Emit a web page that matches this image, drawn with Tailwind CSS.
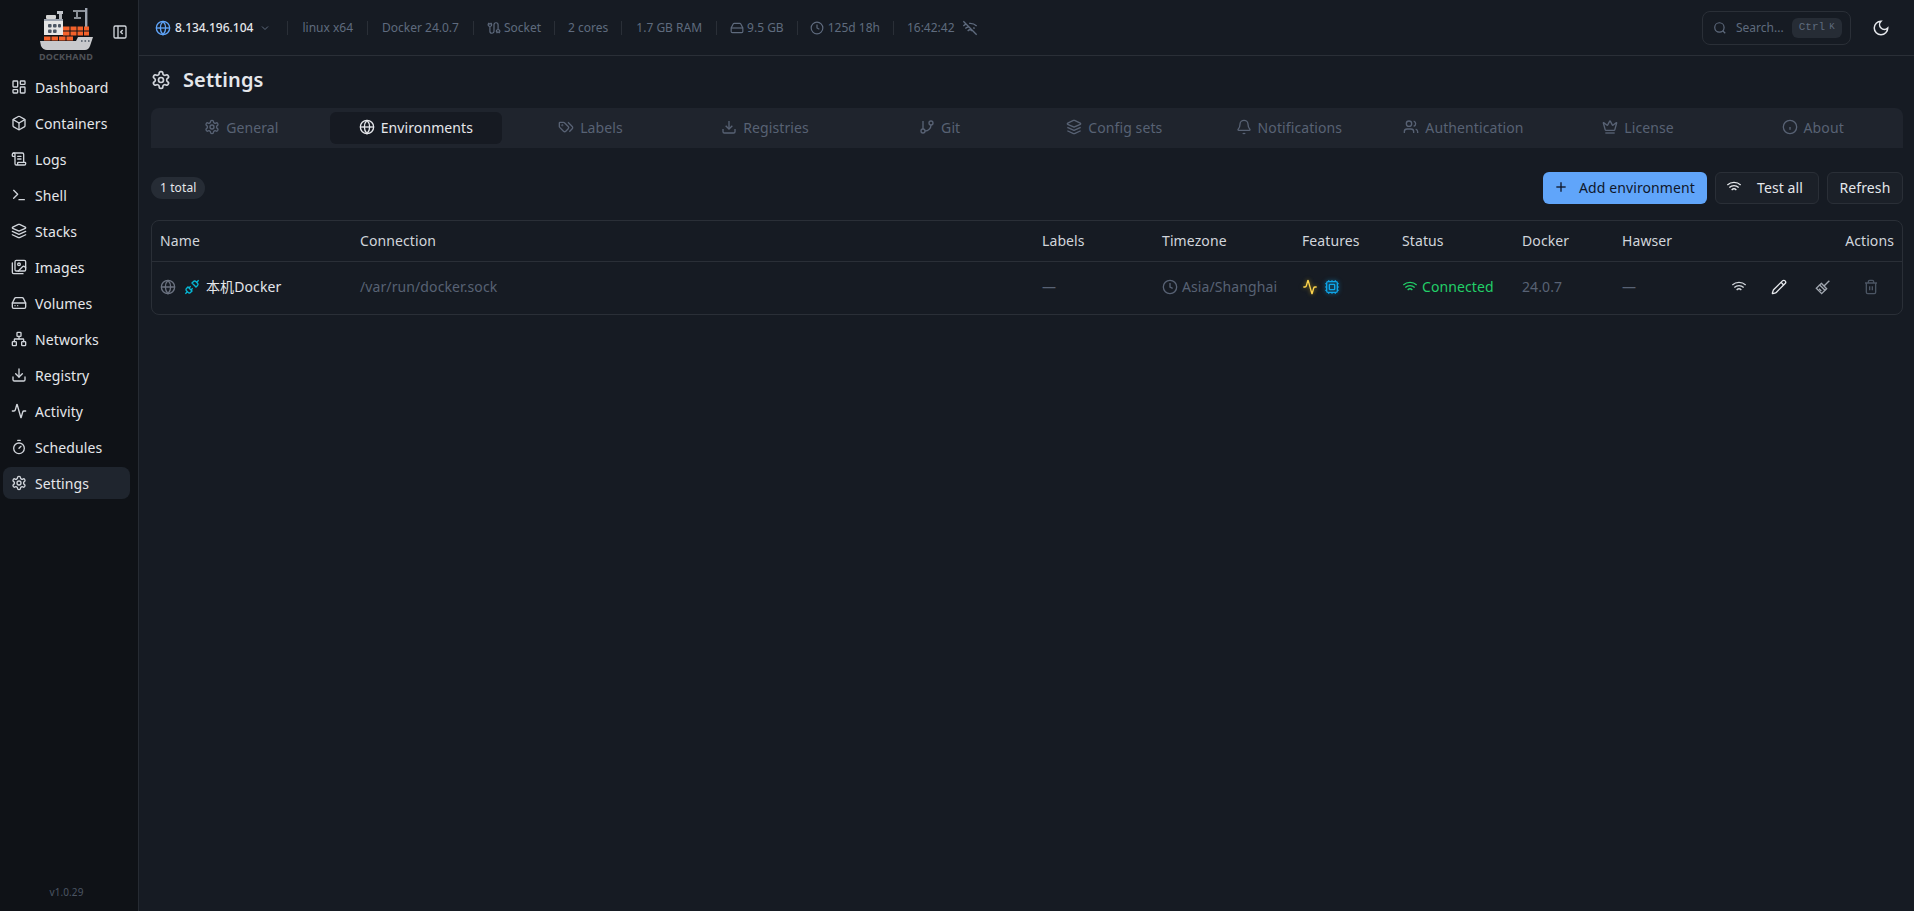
<!DOCTYPE html>
<html lang="en">
<head>
<meta charset="utf-8">
<title>Settings</title>
<script src="https://cdn.jsdelivr.net/npm/@tailwindcss/browser@4"></script>
</head>
<body class="bg-[#161b23] font-['Noto_Sans','Noto_Sans_CJK_SC',sans-serif] tracking-[0.1px] overflow-hidden">
<svg class="hidden">
<defs>
<symbol id="dash" viewBox="0 0 24 24"><rect x="3" y="3" width="7" height="9" rx="1"/><rect x="14" y="3" width="7" height="5" rx="1"/><rect x="14" y="12" width="7" height="9" rx="1"/><rect x="3" y="16" width="7" height="5" rx="1"/></symbol>
<symbol id="box" viewBox="0 0 24 24"><path d="M21 8a2 2 0 0 0-1-1.730l-7-4a2 2 0 0 0-2 0l-7 4A2 2 0 0 0 3 8v8a2 2 0 0 0 1 1.730l7 4a2 2 0 0 0 2 0l7-4A2 2 0 0 0 21 16Z"/><path d="m3.300 7 8.700 5 8.700-5"/><path d="M12 22V12"/></symbol>
<symbol id="scroll" viewBox="0 0 24 24"><path d="M15 12h-5"/><path d="M15 8h-5"/><path d="M19 17V5a2 2 0 0 0-2-2H4"/><path d="M8 21h12a2 2 0 0 0 2-2v-1a1 1 0 0 0-1-1H11a1 1 0 0 0-1 1v1a2 2 0 1 1-4 0V5a2 2 0 1 0-4 0v2a1 1 0 0 0 1 1h3"/></symbol>
<symbol id="term" viewBox="0 0 24 24"><path d="M4 17l6-6-6-6"/><path d="M12 19h8"/></symbol>
<symbol id="layers" viewBox="0 0 24 24"><path d="m12.830 2.180a2 2 0 0 0-1.660 0L2.600 6.080a1 1 0 0 0 0 1.830l8.580 3.910a2 2 0 0 0 1.660 0l8.580-3.900a1 1 0 0 0 0-1.830Z"/><path d="m22 17.650-9.170 4.160a2 2 0 0 1-1.660 0L2 17.650"/><path d="m22 12.650-9.170 4.160a2 2 0 0 1-1.660 0L2 12.650"/></symbol>
<symbol id="images" viewBox="0 0 24 24"><path d="M18 22H4a2 2 0 0 1-2-2V6"/><path d="m22 13-1.296-1.296a2.410 2.410 0 0 0-3.408 0L11 18"/><circle cx="12" cy="8" r="2"/><rect x="6" y="2" width="16" height="16" rx="2"/></symbol>
<symbol id="drive" viewBox="0 0 24 24"><path d="M22 12H2"/><path d="M5.450 5.110 2 12v6a2 2 0 0 0 2 2h16a2 2 0 0 0 2-2v-6l-3.450-6.890A2 2 0 0 0 16.760 4H7.240a2 2 0 0 0-1.790 1.110z"/><path d="M6 16h.01"/><path d="M10 16h.01"/></symbol>
<symbol id="net" viewBox="0 0 24 24"><rect x="16" y="16" width="6" height="6" rx="1"/><rect x="2" y="16" width="6" height="6" rx="1"/><rect x="9" y="2" width="6" height="6" rx="1"/><path d="M5 16v-3a1 1 0 0 1 1-1h12a1 1 0 0 1 1 1v3"/><path d="M12 12V8"/></symbol>
<symbol id="down" viewBox="0 0 24 24"><path d="M21 15v4a2 2 0 0 1-2 2H5a2 2 0 0 1-2-2v-4"/><path d="m7 10 5 5 5-5"/><path d="M12 15V3"/></symbol>
<symbol id="act" viewBox="0 0 24 24"><path d="M22 12h-2.480a2 2 0 0 0-1.930 1.460l-2.350 8.360a.25.25 0 0 1-.48 0L9.240 2.180a.25.25 0 0 0-.48 0l-2.350 8.360A2 2 0 0 1 4.490 12H2"/></symbol>
<symbol id="timer" viewBox="0 0 24 24"><path d="M10 2h4"/><path d="m12 14 3-3"/><circle cx="12" cy="14" r="8"/></symbol>
<symbol id="gear" viewBox="0 0 24 24"><path d="M12.220 2h-.44a2 2 0 0 0-2 2v.18a2 2 0 0 1-1 1.730l-.43.25a2 2 0 0 1-2 0l-.15-.08a2 2 0 0 0-2.730.73l-.22.38a2 2 0 0 0 .73 2.730l.15.1a2 2 0 0 1 1 1.720v.51a2 2 0 0 1-1 1.740l-.15.09a2 2 0 0 0-.73 2.730l.22.38a2 2 0 0 0 2.730.73l.15-.08a2 2 0 0 1 2 0l.43.25a2 2 0 0 1 1 1.730V20a2 2 0 0 0 2 2h.44a2 2 0 0 0 2-2v-.18a2 2 0 0 1 1-1.730l.43-.25a2 2 0 0 1 2 0l.15.08a2 2 0 0 0 2.730-.73l.22-.39a2 2 0 0 0-.73-2.730l-.15-.08a2 2 0 0 1-1-1.740v-.5a2 2 0 0 1 1-1.740l.15-.09a2 2 0 0 0 .73-2.730l-.22-.38a2 2 0 0 0-2.730-.73l-.15.08a2 2 0 0 1-2 0l-.43-.25a2 2 0 0 1-1-1.730V4a2 2 0 0 0-2-2z"/><circle cx="12" cy="12" r="3"/></symbol>
<symbol id="globe" viewBox="0 0 24 24"><circle cx="12" cy="12" r="10"/><path d="M12 2a14.500 14.500 0 0 0 0 20 14.500 14.500 0 0 0 0-20"/><path d="M2 12h20"/></symbol>
<symbol id="tags" viewBox="0 0 24 24"><path d="m15 5 6.300 6.300a2.400 2.400 0 0 1 0 3.400L17 19"/><path d="M9.586 5.586A2 2 0 0 0 8.172 5H3a1 1 0 0 0-1 1v5.172a2 2 0 0 0 .586 1.414L8.290 18.290a2.426 2.426 0 0 0 3.420 0l3.580-3.580a2.426 2.426 0 0 0 0-3.420z"/><circle cx="6.500" cy="9.500" r=".5"/></symbol>
<symbol id="git" viewBox="0 0 24 24"><path d="M6 3v12"/><circle cx="18" cy="6" r="3"/><circle cx="6" cy="18" r="3"/><path d="M18 9a9 9 0 0 1-9 9"/></symbol>
<symbol id="bell" viewBox="0 0 24 24"><path d="M10.268 21a2 2 0 0 0 3.464 0"/><path d="M3.262 15.326A1 1 0 0 0 4 17h16a1 1 0 0 0 .74-1.673C19.410 13.956 18 12.499 18 8A6 6 0 0 0 6 8c0 4.499-1.411 5.956-2.738 7.326"/></symbol>
<symbol id="users" viewBox="0 0 24 24"><path d="M16 21v-2a4 4 0 0 0-4-4H6a4 4 0 0 0-4 4v2"/><circle cx="9" cy="7" r="4"/><path d="M22 21v-2a4 4 0 0 0-3-3.870"/><path d="M16 3.130a4 4 0 0 1 0 7.750"/></symbol>
<symbol id="crown" viewBox="0 0 24 24"><path d="M11.562 3.266a.5.5 0 0 1 .876 0L15.390 8.870a1 1 0 0 0 1.516.294L21.183 5.500a.5.5 0 0 1 .798.519l-2.834 10.246a1 1 0 0 1-.956.734H5.810a1 1 0 0 1-.957-.734L2.020 6.020a.5.5 0 0 1 .798-.519l4.276 3.664a1 1 0 0 0 1.516-.294z"/><path d="M5 21h14"/></symbol>
<symbol id="info" viewBox="0 0 24 24"><circle cx="12" cy="12" r="10"/><path d="M12 16v-4"/><path d="M12 8h.01"/></symbol>
<symbol id="plus" viewBox="0 0 24 24"><path d="M5 12h14"/><path d="M12 5v14"/></symbol>
<symbol id="wifi" viewBox="0 0 24 24"><path d="M12 20h.01"/><path d="M2 8.820a15 15 0 0 1 20 0"/><path d="M5 12.859a10 10 0 0 1 14 0"/><path d="M8.500 16.429a5 5 0 0 1 7 0"/></symbol>
<symbol id="wifioff" viewBox="0 0 24 24"><path d="M12 20h.01"/><path d="M8.500 16.429a5 5 0 0 1 7 0"/><path d="M5 12.859a10 10 0 0 1 5.170-2.690"/><path d="M19 12.859a10 10 0 0 0-2.007-1.523"/><path d="M2 8.820a15 15 0 0 1 4.177-2.643"/><path d="M22 8.820a15 15 0 0 0-11.288-3.764"/><path d="m2 2 20 20"/></symbol>
<symbol id="pencil" viewBox="0 0 24 24"><path d="M21.174 6.812a1 1 0 0 0-3.986-3.987L3.842 16.174a2 2 0 0 0-.5.83l-1.321 4.352a.5.5 0 0 0 .623.622l4.353-1.320a2 2 0 0 0 .83-.497z"/><path d="m15 5 4 4"/></symbol>
<symbol id="brush" viewBox="0 0 24 24"><path d="M21.500 2.500 13.500 10.500"/><path d="M9.500 6.500l8 8-2.500 2.500-8-8z"/><path d="M7 9 2 14l8 8 5-5"/><path d="M6 14.500l3.500 3.500"/></symbol>
<symbol id="trash" viewBox="0 0 24 24"><path d="M10 11v6"/><path d="M14 11v6"/><path d="M19 6v14a2 2 0 0 1-2 2H7a2 2 0 0 1-2-2V6"/><path d="M3 6h18"/><path d="M8 6V4a2 2 0 0 1 2-2h4a2 2 0 0 1 2 2v2"/></symbol>
<symbol id="cpu" viewBox="0 0 24 24"><path d="M12 20v2"/><path d="M12 2v2"/><path d="M17 20v2"/><path d="M17 2v2"/><path d="M2 12h2"/><path d="M2 17h2"/><path d="M2 7h2"/><path d="M20 12h2"/><path d="M20 17h2"/><path d="M20 7h2"/><path d="M7 20v2"/><path d="M7 2v2"/><rect x="4" y="4" width="16" height="16" rx="2"/><rect x="8" y="8" width="8" height="8" rx="1"/></symbol>
<symbol id="cable" viewBox="0 0 24 24"><path d="M17 21v-2a1 1 0 0 1-1-1v-1a2 2 0 0 1 2-2h2a2 2 0 0 1 2 2v1a1 1 0 0 1-1 1"/><path d="M19 15V6.500a1 1 0 0 0-7 0v11a1 1 0 0 1-7 0V9"/><path d="M21 21v-2h-4"/><path d="M3 5h4V3"/><path d="M7 5a1 1 0 0 1 1 1v1a2 2 0 0 1-2 2H4a2 2 0 0 1-2-2V6a1 1 0 0 1 1-1V3"/></symbol>
<symbol id="unplug" viewBox="0 0 24 24"><path d="m19 5 3-3"/><path d="m2 22 3-3"/><path d="M6.300 20.300a2.400 2.400 0 0 0 3.400 0L12 18l-6-6-2.300 2.300a2.400 2.400 0 0 0 0 3.400Z"/><path d="M7.500 13.500 10 11"/><path d="M10.500 16.500 13 14"/><path d="m12 6 6 6 2.300-2.300a2.400 2.400 0 0 0 0-3.400l-2.600-2.600a2.400 2.400 0 0 0-3.400 0Z"/></symbol>
<symbol id="panel" viewBox="0 0 24 24"><rect x="3" y="3" width="18" height="18" rx="2"/><path d="M9 3v18"/><path d="m16 15-3-3 3-3"/></symbol>
<symbol id="moon" viewBox="0 0 24 24"><path d="M12 3a6 6 0 0 0 9 9 9 9 0 1 1-9-9Z"/></symbol>
<symbol id="search" viewBox="0 0 24 24"><path d="m21 21-4.340-4.340"/><circle cx="11" cy="11" r="8"/></symbol>
<symbol id="chev" viewBox="0 0 24 24"><path d="m6 9 6 6 6-6"/></symbol>
<symbol id="clock" viewBox="0 0 24 24"><circle cx="12" cy="12" r="10"/><path d="M12 6v6l4 2"/></symbol>
</defs>
</svg>

<div class="flex h-[911px] w-[1914px]">
  <!-- Sidebar -->
  <aside class="flex w-[139px] shrink-0 flex-col border-r border-[#262b33] bg-[#0f1217]">
    <div class="relative h-[71px] shrink-0">
      <div class="absolute left-[39px] top-[8px] flex w-[54px] flex-col items-center">
        <svg width="54" height="42" viewBox="0 0 54 42">
          <rect x="46" y="0" width="2.400" height="20" fill="#9ca3af"/>
          <path d="M34 3h12M38 3v7M35 10h7" stroke="#8b9098" stroke-width="2" fill="none"/>
          <rect x="18" y="3" width="6" height="3" fill="#c4c7cc"/><rect x="20" y="6" width="3" height="8" fill="#b2b5ba"/>
          <rect x="7" y="7" width="10" height="4" rx="1" fill="#d4d4d4"/>
          <rect x="5" y="11" width="19" height="2" fill="#9ca3af"/>
          <rect x="5" y="13" width="19" height="14" fill="#e5e5e5"/>
          <rect x="9" y="16" width="3.600" height="3.600" rx="1" fill="#4b5563"/><rect x="14" y="16" width="3.600" height="3.600" rx="1" fill="#4b5563"/><rect x="19" y="16" width="3" height="3.600" rx="1" fill="#4b5563"/>
          <rect x="9" y="21.500" width="3.600" height="3.600" rx="1" fill="#4b5563"/><rect x="14" y="21.500" width="3.600" height="3.600" rx="1" fill="#4b5563"/>
          <g fill="#f4612a">
            <rect x="24" y="18.500" width="6.500" height="4"/><rect x="31.500" y="18.500" width="6" height="4"/><rect x="38.500" y="18.500" width="5.500" height="4"/><rect x="45" y="18.500" width="5" height="4"/>
            <rect x="24" y="23.500" width="6.500" height="4"/><rect x="31.500" y="23.500" width="6" height="4"/><rect x="38.500" y="23.500" width="5.500" height="4"/><rect x="45" y="23.500" width="5" height="4"/>
            <rect x="5" y="28.500" width="6.500" height="4"/><rect x="12.500" y="28.500" width="6.500" height="4"/><rect x="20" y="28.500" width="6.500" height="4"/><rect x="27.500" y="28.500" width="6.500" height="4"/>
          </g>
          <path d="M1 33h36l2-4h15l-3 9q-1.500 4-5 4H8q-4 0-6-4z" fill="#c8c9cc"/>
          <path d="M42 33h1.600M45.500 33h1.600M49 33h1.600" stroke="#4b5563" stroke-width="1.600"/>
        </svg>
        <span class="mt-[2px] text-[9px] leading-[10px] font-bold tracking-[0.2px] text-[#4f5258]">DOCKHAND</span>
      </div>
      <svg class="absolute left-[112px] top-[24px] size-4 fill-none stroke-[#d1d5db] stroke-2"><use href="#panel"/></svg>
    </div>
    <nav class="flex flex-col gap-1 pl-[3px] pr-[8px] text-[14px] text-[#e5e7eb]">
      <a class="flex h-8 items-center gap-2 rounded-lg pl-2"><svg class="size-4 fill-none stroke-[#d1d5db] stroke-2 [stroke-linecap:round] [stroke-linejoin:round]"><use href="#dash"/></svg>Dashboard</a>
      <a class="flex h-8 items-center gap-2 rounded-lg pl-2"><svg class="size-4 fill-none stroke-[#d1d5db] stroke-2 [stroke-linecap:round] [stroke-linejoin:round]"><use href="#box"/></svg>Containers</a>
      <a class="flex h-8 items-center gap-2 rounded-lg pl-2"><svg class="size-4 fill-none stroke-[#d1d5db] stroke-2 [stroke-linecap:round] [stroke-linejoin:round]"><use href="#scroll"/></svg>Logs</a>
      <a class="flex h-8 items-center gap-2 rounded-lg pl-2"><svg class="size-4 fill-none stroke-[#d1d5db] stroke-2 [stroke-linecap:round] [stroke-linejoin:round]"><use href="#term"/></svg>Shell</a>
      <a class="flex h-8 items-center gap-2 rounded-lg pl-2"><svg class="size-4 fill-none stroke-[#d1d5db] stroke-2 [stroke-linecap:round] [stroke-linejoin:round]"><use href="#layers"/></svg>Stacks</a>
      <a class="flex h-8 items-center gap-2 rounded-lg pl-2"><svg class="size-4 fill-none stroke-[#d1d5db] stroke-2 [stroke-linecap:round] [stroke-linejoin:round]"><use href="#images"/></svg>Images</a>
      <a class="flex h-8 items-center gap-2 rounded-lg pl-2"><svg class="size-4 fill-none stroke-[#d1d5db] stroke-2 [stroke-linecap:round] [stroke-linejoin:round]"><use href="#drive"/></svg>Volumes</a>
      <a class="flex h-8 items-center gap-2 rounded-lg pl-2"><svg class="size-4 fill-none stroke-[#d1d5db] stroke-2 [stroke-linecap:round] [stroke-linejoin:round]"><use href="#net"/></svg>Networks</a>
      <a class="flex h-8 items-center gap-2 rounded-lg pl-2"><svg class="size-4 fill-none stroke-[#d1d5db] stroke-2 [stroke-linecap:round] [stroke-linejoin:round]"><use href="#down"/></svg>Registry</a>
      <a class="flex h-8 items-center gap-2 rounded-lg pl-2"><svg class="size-4 fill-none stroke-[#d1d5db] stroke-2 [stroke-linecap:round] [stroke-linejoin:round]"><use href="#act"/></svg>Activity</a>
      <a class="flex h-8 items-center gap-2 rounded-lg pl-2"><svg class="size-4 fill-none stroke-[#d1d5db] stroke-2 [stroke-linecap:round] [stroke-linejoin:round]"><use href="#timer"/></svg>Schedules</a>
      <a class="flex h-8 items-center gap-2 rounded-lg bg-[#1f252e] pl-2"><svg class="size-4 fill-none stroke-[#d1d5db] stroke-2 [stroke-linecap:round] [stroke-linejoin:round]"><use href="#gear"/></svg>Settings</a>
    </nav>
    <div class="mt-auto pb-[11px] pr-[5px] text-center text-[10px] leading-[15px] text-[#4b5563]">v1.0.29</div>
  </aside>

  <!-- Main -->
  <main class="flex min-w-0 flex-1 flex-col">
    <header class="flex h-[56px] shrink-0 items-center border-b border-[#2a2f37] pl-[16px] pr-[24px] text-[12px] tracking-normal text-[#5f6b7e]">
      <div class="flex items-center">
        <svg class="size-4 fill-none stroke-[#60a5fa] stroke-2"><use href="#globe"/></svg>
        <span class="ml-[4px] font-medium text-[#e5e7eb]">8.134.196.104</span>
        <svg class="ml-[6px] size-[12px] fill-none stroke-[#5f6b7e] stroke-2"><use href="#chev"/></svg>
      </div>
      <span class="ml-[16px] h-[14px] w-px bg-[#2a2f37]"></span>
      <span class="ml-[14px]">linux x64</span>
      <span class="ml-[14px] h-[14px] w-px bg-[#2a2f37]"></span>
      <span class="ml-[14px]">Docker 24.0.7</span>
      <span class="ml-[14px] h-[14px] w-px bg-[#2a2f37]"></span>
      <svg class="ml-[13px] size-[14px] fill-none stroke-[#5f6b7e] stroke-2"><use href="#cable"/></svg>
      <span class="ml-[3px]">Socket</span>
      <span class="ml-[13px] h-[14px] w-px bg-[#2a2f37]"></span>
      <span class="ml-[13px]">2 cores</span>
      <span class="ml-[13px] h-[14px] w-px bg-[#2a2f37]"></span>
      <span class="ml-[14px]">1.7 GB RAM</span>
      <span class="ml-[14px] h-[14px] w-px bg-[#2a2f37]"></span>
      <svg class="ml-[13px] size-[14px] fill-none stroke-[#5f6b7e] stroke-2"><use href="#drive"/></svg>
      <span class="ml-[3px]">9.5 GB</span>
      <span class="ml-[13px] h-[14px] w-px bg-[#2a2f37]"></span>
      <svg class="ml-[12px] size-[14px] fill-none stroke-[#5f6b7e] stroke-2"><use href="#clock"/></svg>
      <span class="ml-[4px]">125d 18h</span>
      <span class="ml-[13px] h-[14px] w-px bg-[#2a2f37]"></span>
      <span class="ml-[13px]">16:42:42</span>
      <svg class="ml-[7px] size-4 fill-none stroke-[#5f6b7e] stroke-2"><use href="#wifioff"/></svg>
      <div class="ml-auto flex h-[34px] w-[149px] items-center rounded-lg border border-[#2a2f37] pl-[10px]">
        <svg class="size-[14px] fill-none stroke-[#5f6b7e] stroke-2"><use href="#search"/></svg>
        <span class="ml-[9px]">Search...</span>
        <span class="ml-[8px] flex h-[20px] w-[50px] items-center justify-center rounded-md bg-[#262c35] font-['Liberation_Mono',monospace] text-[11px]">Ctrl <span class="ml-1 text-[9px]">K</span></span>
      </div>
      <svg class="ml-[21px] size-[18px] fill-none stroke-[#e5e7eb] stroke-2"><use href="#moon"/></svg>
    </header>

    <div class="flex flex-1 flex-col pl-[12px] pr-[11px] pt-[10px]">
      <div class="flex h-[28px] items-center gap-3 text-[#e5e7eb]">
        <svg class="size-5 fill-none stroke-[#d1d5db] stroke-2"><use href="#gear"/></svg>
        <h1 class="text-[20px] font-semibold leading-[28px]">Settings</h1>
      </div>

      <div class="mt-[14px] grid h-[40px] grid-cols-10 gap-0.5 rounded-t-lg bg-[#1f242d] p-1 text-[14px] text-[#586274]">
        <div class="flex items-center justify-center gap-[6px] rounded-md pb-[2px]"><svg class="size-4 fill-none stroke-current stroke-2"><use href="#gear"/></svg>General</div>
        <div class="flex items-center justify-center gap-[6px] rounded-md bg-[#161a22] pb-[2px] text-[#e5e7eb]"><svg class="size-4 fill-none stroke-current stroke-2"><use href="#globe"/></svg>Environments</div>
        <div class="flex items-center justify-center gap-[6px] rounded-md pb-[2px]"><svg class="size-4 fill-none stroke-current stroke-2"><use href="#tags"/></svg>Labels</div>
        <div class="flex items-center justify-center gap-[6px] rounded-md pb-[2px]"><svg class="size-4 fill-none stroke-current stroke-2"><use href="#down"/></svg>Registries</div>
        <div class="flex items-center justify-center gap-[6px] rounded-md pb-[2px]"><svg class="size-4 fill-none stroke-current stroke-2"><use href="#git"/></svg>Git</div>
        <div class="flex items-center justify-center gap-[6px] rounded-md pb-[2px]"><svg class="size-4 fill-none stroke-current stroke-2"><use href="#layers"/></svg>Config sets</div>
        <div class="flex items-center justify-center gap-[6px] rounded-md pb-[2px]"><svg class="size-4 fill-none stroke-current stroke-2"><use href="#bell"/></svg>Notifications</div>
        <div class="flex items-center justify-center gap-[6px] rounded-md pb-[2px]"><svg class="size-4 fill-none stroke-current stroke-2"><use href="#users"/></svg>Authentication</div>
        <div class="flex items-center justify-center gap-[6px] rounded-md pb-[2px]"><svg class="size-4 fill-none stroke-current stroke-2"><use href="#crown"/></svg>License</div>
        <div class="flex items-center justify-center gap-[6px] rounded-md pb-[2px]"><svg class="size-4 fill-none stroke-current stroke-2"><use href="#info"/></svg>About</div>
      </div>

      <div class="mt-[24px] flex h-8 items-center justify-between">
        <span class="flex h-[22px] items-center rounded-full bg-[#262c35] px-[9px] text-[12px] text-[#e5e7eb]">1 total</span>
        <div class="flex items-center gap-2 text-[14px]">
          <button class="flex h-8 w-[164px] items-center gap-[10px] rounded-md bg-[#60a5fa] pb-[2px] pl-[10px] text-[#0f172a]"><svg class="size-4 fill-none stroke-current stroke-2"><use href="#plus"/></svg>Add environment</button>
          <button class="flex h-8 w-[104px] items-center gap-[15px] rounded-md border border-[#2a2f37] bg-[#1b2028] pb-[2px] pl-[10px] text-[#e5e7eb]"><svg class="size-4 fill-none stroke-current stroke-2"><use href="#wifi"/></svg>Test all</button>
          <button class="flex h-8 w-[76px] items-center justify-center rounded-md border border-[#2a2f37] bg-[#1b2028] pb-[2px] text-[#e5e7eb]">Refresh</button>
        </div>
      </div>

      <div class="mt-[16px] overflow-hidden rounded-lg border border-[#2a2f37]">
        <table class="w-full table-fixed border-collapse text-left text-[14px]">
          <colgroup>
            <col class="w-[200px]"><col class="w-[682px]"><col class="w-[120px]"><col class="w-[140px]"><col class="w-[100px]"><col class="w-[120px]"><col class="w-[100px]"><col>
          </colgroup>
          <thead>
            <tr class="h-[40px] border-b border-[#2a2f37] text-[#d1d5db]">
              <th class="px-2 font-normal">Name</th>
              <th class="px-2 font-normal">Connection</th>
              <th class="px-2 font-normal">Labels</th>
              <th class="px-2 font-normal">Timezone</th>
              <th class="px-2 font-normal">Features</th>
              <th class="px-2 font-normal">Status</th>
              <th class="px-2 font-normal">Docker</th>
              <th class="px-2 font-normal"><div class="flex justify-between"><span>Hawser</span><span>Actions</span></div></th>
            </tr>
          </thead>
          <tbody>
            <tr class="h-[53px] text-[#586274]">
              <td class="px-2 pb-[2px]"><div class="flex items-center text-[#e5e7eb]"><svg class="size-4 fill-none stroke-[#6b7280] stroke-2"><use href="#globe"/></svg><svg class="ml-2 size-4 fill-none stroke-[#06b6d4] stroke-2"><use href="#unplug"/></svg><span class="ml-[6px]">本机Docker</span></div></td>
              <td class="px-2 pb-[2px]">/var/run/docker.sock</td>
              <td class="px-2 pb-[2px]">—</td>
              <td class="px-2 pb-[2px]"><div class="flex items-center gap-1"><svg class="size-4 fill-none stroke-current stroke-2"><use href="#clock"/></svg>Asia/Shanghai</div></td>
              <td class="px-2 pb-[2px]"><div class="flex items-center gap-[6px]"><svg class="size-4 fill-none stroke-[#fcd34d] stroke-2 drop-shadow-[0_0_2px_rgba(250,204,21,0.5)]"><use href="#act"/></svg><svg class="size-4 fill-none stroke-[#0ea5e9] stroke-2 drop-shadow-[0_0_2px_rgba(14,165,233,0.6)]"><use href="#cpu"/></svg></div></td>
              <td class="px-2 pb-[2px]"><div class="flex items-center gap-1 text-[#22cf68]"><svg class="size-4 fill-none stroke-current stroke-2"><use href="#wifi"/></svg>Connected</div></td>
              <td class="px-2 pb-[2px]">24.0.7</td>
              <td class="px-2 pb-[2px]"><div class="flex items-center"><span>—</span>
                <div class="ml-auto flex items-center pr-[15px]">
                  <svg class="size-4 fill-none stroke-[#d1d5db] stroke-2"><use href="#wifi"/></svg>
                  <svg class="ml-[24px] size-4 fill-none stroke-[#e5e7eb] stroke-2"><use href="#pencil"/></svg>
                  <svg class="ml-[28px] size-4 fill-none stroke-[#a1a7b0] stroke-2"><use href="#brush"/></svg>
                  <svg class="ml-[32px] size-4 fill-none stroke-[#4b5563] stroke-2"><use href="#trash"/></svg>
                </div></div></td>
            </tr>
          </tbody>
        </table>
      </div>
    </div>
  </main>
</div>
</body>
</html>
